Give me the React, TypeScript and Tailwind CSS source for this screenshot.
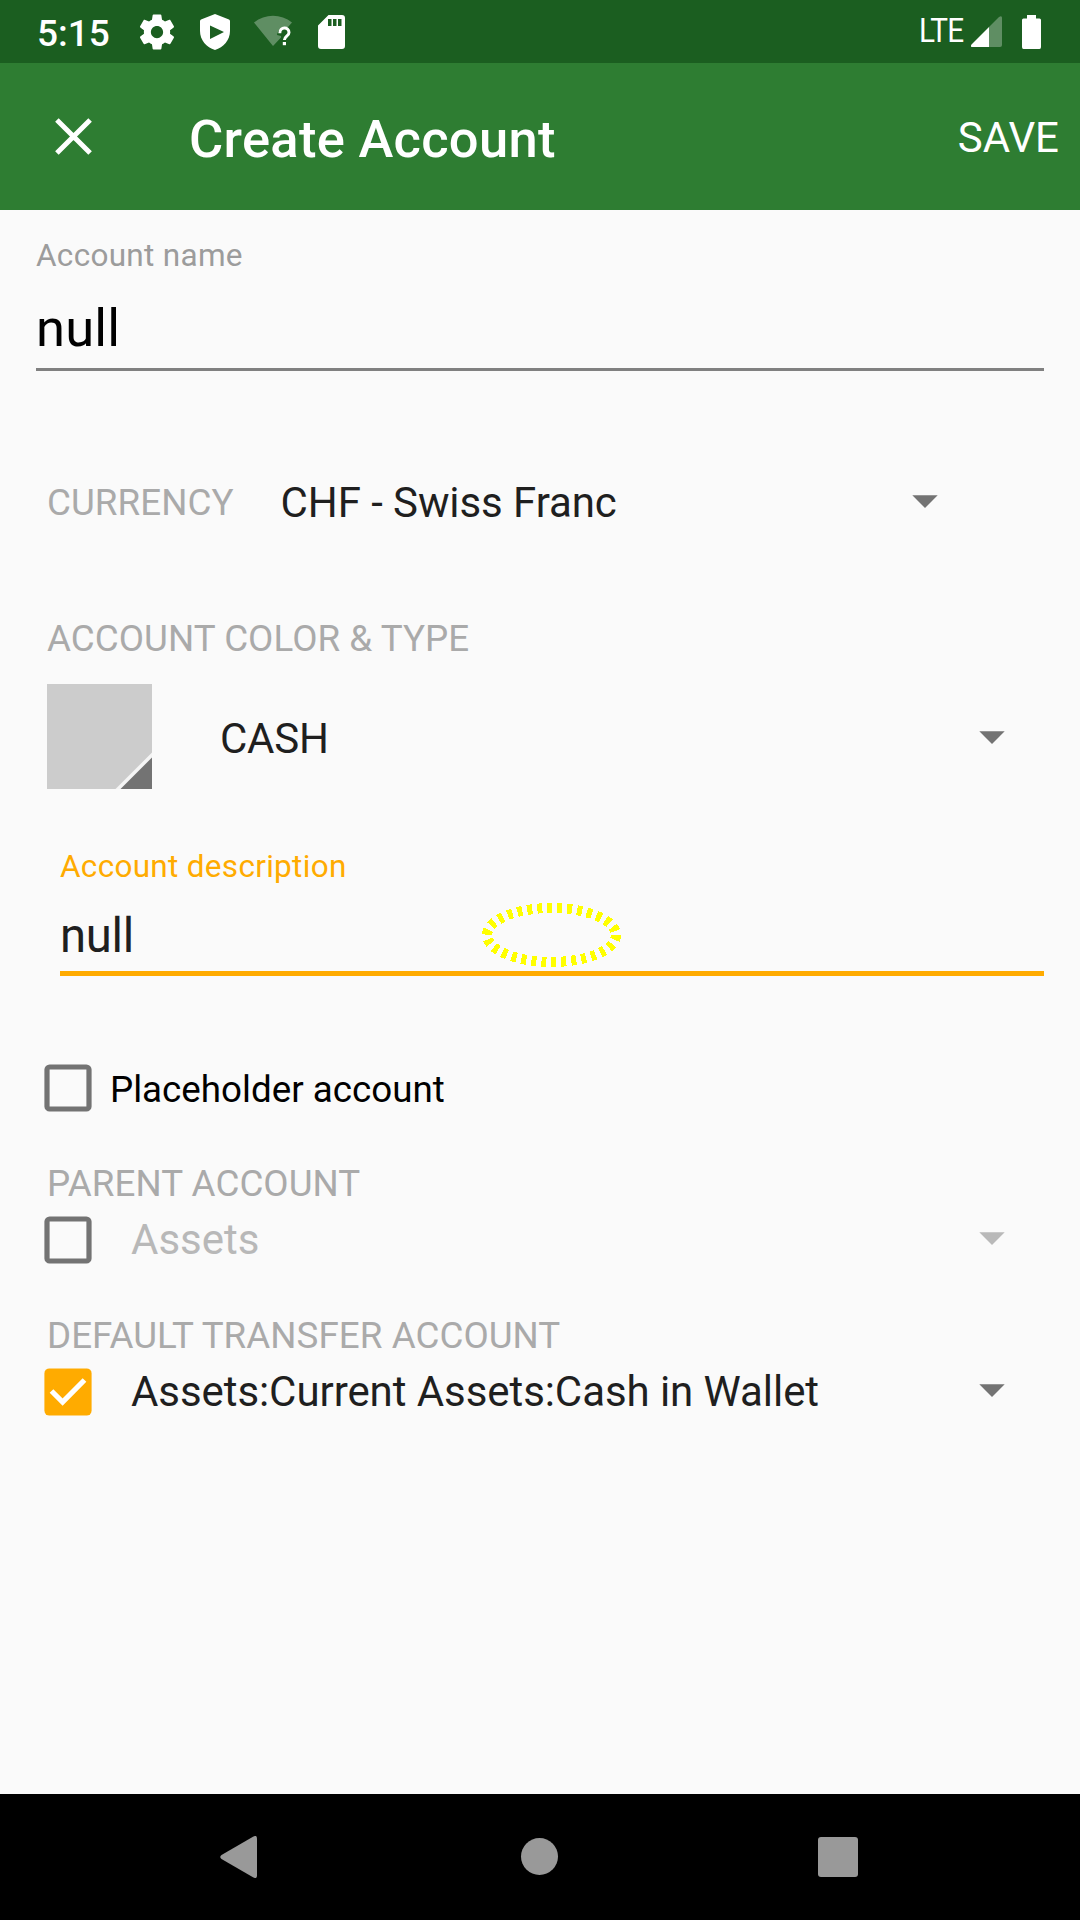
import React from "react";

function StatusBar() {
  return (
    <div className="flex h-[63px] items-center justify-between bg-[#1b5e20] text-white">
      <div className="flex h-full items-center">
        <span className="ml-[37px] w-[73px] text-[37px] font-medium leading-[44px] whitespace-nowrap pt-[5px]">5:15</span>
        <svg className="ml-[26px] h-[42px] w-[42px]" viewBox="0 0 24 24" fill="currentColor">
          <path d="M19.43 12.98c.04-.32.07-.64.07-.98s-.03-.66-.07-.98l2.11-1.65c.19-.15.24-.42.12-.64l-2-3.46c-.12-.22-.39-.3-.61-.22l-2.49 1c-.52-.4-1.08-.73-1.69-.98l-.38-2.65C14.46 2.18 14.25 2 14 2h-4c-.25 0-.46.18-.49.42l-.38 2.65c-.61.25-1.17.59-1.69.98l-2.49-1c-.23-.09-.49 0-.61.22l-2 3.46c-.13.22-.07.49.12.64l2.11 1.65c-.04.32-.07.65-.07.98s.03.66.07.98l-2.11 1.65c-.19.15-.24.42-.12.64l2 3.46c.12.22.39.3.61.22l2.49-1c.52.4 1.08.73 1.69.98l.38 2.65c.03.24.24.42.49.42h4c.25 0 .46-.18.49-.42l.38-2.65c.61-.25 1.17-.59 1.69-.98l2.49 1c.23.09.49 0 .61-.22l2-3.46c.12-.22.07-.49-.12-.64l-2.11-1.65zM12 15.5c-1.93 0-3.5-1.57-3.5-3.5s1.57-3.5 3.5-3.5 3.5 1.57 3.5 3.5-1.57 3.5-3.5 3.5z" />
        </svg>
        <svg className="ml-[22px] h-[36px] w-[30px]" viewBox="0 0 30 36" fill="currentColor">
          <path fillRule="evenodd" d="M15 0 L29 5.500 Q30 6 30 7 V17 C30 26 23.500 33.500 15 36 C6.500 33.500 0 26 0 17 V7 Q0 6 1 5.500 Z M10 11.500 V25 L24 18 Z" />
        </svg>
        <svg className="ml-[24px] h-[34px] w-[39px]" viewBox="0 0 39 34">
          <path d="M0 7.500 C11 -1.500 27 -1.500 38 7.500 L34 12 C29 11.500 24 14 23 20 L27 21 L27 22.500 L19 31 Z" fill="#fff" fillOpacity="0.3" />
          <path d="M25.800 18.200 C25.800 11.500 35 11.500 35 17.500 C35 21.200 30.400 21.200 30.400 25" fill="none" stroke="#fff" strokeWidth="3" />
          <rect x="28.800" y="27" width="3.200" height="3.200" fill="#fff" />
        </svg>
        <svg className="ml-[25px] h-[34px] w-[27px]" viewBox="0 0 27 34" fill="currentColor">
          <path fillRule="evenodd" d="M10.500 0 H24 Q27 0 27 3 V31 Q27 34 24 34 H3 Q0 34 0 31 V10.500 Z M10 4 V11 H13.500 V4 Z M15 4 V11 H18.500 V4 Z M20 4 V11 H23.500 V4 Z" />
        </svg>
      </div>
      <div className="flex h-full items-center">
        <span className="w-[44px] origin-left scale-x-90 pb-[1px] text-[33px] leading-[40px] whitespace-nowrap tracking-[-0.8px]">LTE</span>
        <svg className="ml-[8px] h-[31px] w-[31px]" viewBox="0 0 31 31" fill="#fff">
          <path d="M18 11 L28 1 Q31 -1 31 2 V29 Q31 31 29 31 H18 Z" fillOpacity="0.3" />
          <path d="M18 11 V31 H1.500 Q-1 31 .5 28.500 Z" />
        </svg>
        <svg className="ml-[20px] mr-[39px] h-[34px] w-[19px]" viewBox="0 0 19 34" fill="#fff">
          <path d="M5 0 H14 V3.500 H17.500 Q19 3.500 19 5 V32 Q19 34 17.500 34 H1.500 Q0 34 0 32 V5 Q0 3.500 1.500 3.500 H5 Z" />
        </svg>
      </div>
    </div>
  );
}

function Toolbar() {
  return (
    <header className="flex h-[147px] items-center bg-[#2e7d32] text-white">
      <svg className="ml-[55px] h-[37px] w-[37px]" viewBox="0 0 37 37" stroke="#fff" strokeWidth="5">
        <path d="M1.900 1.900 L35.100 35.100 M35.100 1.900 L1.900 35.100" />
      </svg>
      <h1 className="ml-[97px] mt-[4px] text-[52.5px] font-medium leading-[62px] tracking-[0.28px] whitespace-nowrap">Create Account</h1>
      <button className="ml-auto mr-[21px] mt-[2px] text-[42px] leading-[50px]">SAVE</button>
    </header>
  );
}

function Caret({ faded = false }: { faded?: boolean }) {
  return (
    <svg className="h-[13px] w-[26px] shrink-0" viewBox="0 0 26 13" fill={faded ? "#b9b9b9" : "#737373"}>
      <path d="M0.300 0.300 H25.700 L13 13 Z" />
    </svg>
  );
}

function Checkbox({ checked = false }: { checked?: boolean }) {
  return (
    <svg className="h-[48px] w-[48px] shrink-0" viewBox="0 0 48 48" fill="none">
      {checked ? (
        <>
          <rect x="0.400" y="0.400" width="47.200" height="47.200" rx="5" fill="#ffab00" />
          <path d="M7.500 23 L18.600 34 L40.500 12" stroke="#fff" strokeWidth="5.200" />
        </>
      ) : (
        <rect x="3" y="3" width="42" height="42" rx="2.600" stroke="#737373" strokeWidth="5.200" />
      )}
    </svg>
  );
}

function SectionLabel({ children }: { children: React.ReactNode }) {
  return <div className="ml-[47px] h-[44px] text-[36.75px] leading-[44px] tracking-[0.05px] whitespace-nowrap text-[#aaaaaa]">{children}</div>;
}

function ClickMarker() {
  return (
    <svg className="pointer-events-none absolute left-[422px] top-[-6px] h-[66px] w-[140px]" viewBox="0 0 140 66">
      <ellipse cx="69.500" cy="33" rx="64.500" ry="27" fill="none" stroke="#ffff00" strokeWidth="10" strokeDasharray="5 5" shapeRendering="crispEdges" />
    </svg>
  );
}

function Form() {
  return (
    <main className="flex flex-1 flex-col">
      <label className="ml-[36px] mt-[27px] h-[37px] text-[31.5px] leading-[37px] tracking-[0.3px] text-[#9c9c9c]">Account name</label>
      <div className="ml-[36px] mr-[36px] mt-[23px] h-[74px] border-b-[3px] border-[#808080] text-[52.5px] leading-[62px] tracking-[0.2px] text-black">null</div>

      <div className="mt-[107px] flex h-[50px] items-center">
        <SectionLabel>CURRENCY</SectionLabel>
        <span className="ml-[47px] text-[42px] leading-[50px] tracking-[-0.08px] whitespace-nowrap">CHF - Swiss Franc</span>
        <div className="ml-auto mr-[142.5px] flex pb-[3px]"><Caret /></div>
      </div>

      <div className="mt-[89px]"><SectionLabel>ACCOUNT COLOR &amp; TYPE</SectionLabel></div>
      <div className="mt-[23px] flex h-[105px] items-center">
        <svg className="ml-[47px] h-[105px] w-[105px]" viewBox="0 0 105 105">
          <rect width="105" height="105" fill="#cccccc" />
          <path d="M105 68.500 V105 H68.500 Z" fill="#f5f5f5" />
          <path d="M105 73.500 V105 H73.500 Z" fill="#737373" />
        </svg>
        <span className="ml-[68px] mt-[4px] text-[42px] leading-[50px] tracking-[-0.25px]">CASH</span>
        <div className="ml-auto mr-[75.5px] mt-[2px] flex"><Caret /></div>
      </div>

      <label className="ml-[60px] mt-[59px] h-[37px] text-[31.5px] leading-[37px] tracking-[0.3px] text-[#ffab00]">Account description</label>
      <div className="relative ml-[60px] mr-[36px] mt-[23px] h-[68px] border-b-[5px] border-[#ffab00] text-[47.25px] leading-[56px] tracking-[-0.3px]">
        null
        <ClickMarker />
      </div>

      <div className="ml-[44px] mt-[88px] flex h-[48px] items-center">
        <Checkbox />
        <span className="ml-[18px] mt-[4px] text-[36.75px] leading-[44px] text-black">Placeholder account</span>
      </div>

      <div className="mt-[50px]"><SectionLabel>PARENT ACCOUNT</SectionLabel></div>
      <div className="ml-[44px] mt-[10px] flex h-[48px] items-center">
        <Checkbox />
        <span className="ml-[39px] text-[42px] leading-[50px] text-[#b8b8b8]">Assets</span>
        <div className="ml-auto mr-[75.5px] flex pb-[3px]"><Caret faded /></div>
      </div>

      <div className="mt-[50px]"><SectionLabel>DEFAULT TRANSFER ACCOUNT</SectionLabel></div>
      <div className="ml-[44px] mt-[10px] flex h-[48px] items-center">
        <Checkbox checked />
        <span className="ml-[39px] text-[42px] leading-[50px] tracking-[-0.07px] whitespace-nowrap">Assets:Current Assets:Cash in Wallet</span>
        <div className="ml-auto mr-[75.5px] flex pb-[3px]"><Caret /></div>
      </div>
    </main>
  );
}

function NavigationBar() {
  return (
    <nav className="flex h-[126px] items-center bg-black">
      <svg className="ml-[220px] h-[42px] w-[37px]" viewBox="0 0 37 42" fill="#999">
        <path d="M33 .8 Q37 -1.500 37 2.500 V39.500 Q37 43.500 33 41.200 L1.500 23 Q-1 21 1.500 19 Z" />
      </svg>
      <div className="mb-[1px] ml-[264px] h-[37px] w-[37px] rounded-full bg-[#999]" />
      <div className="ml-[260px] h-[40px] w-[40px] rounded-[3px] bg-[#999]" />
    </nav>
  );
}

export default function App() {
  return (
    <div className="flex h-[1920px] w-[1080px] flex-col overflow-hidden bg-[#fafafa] font-['Roboto',sans-serif] text-[#1f1f1f]">
      <StatusBar />
      <Toolbar />
      <Form />
      <NavigationBar />
    </div>
  );
}
